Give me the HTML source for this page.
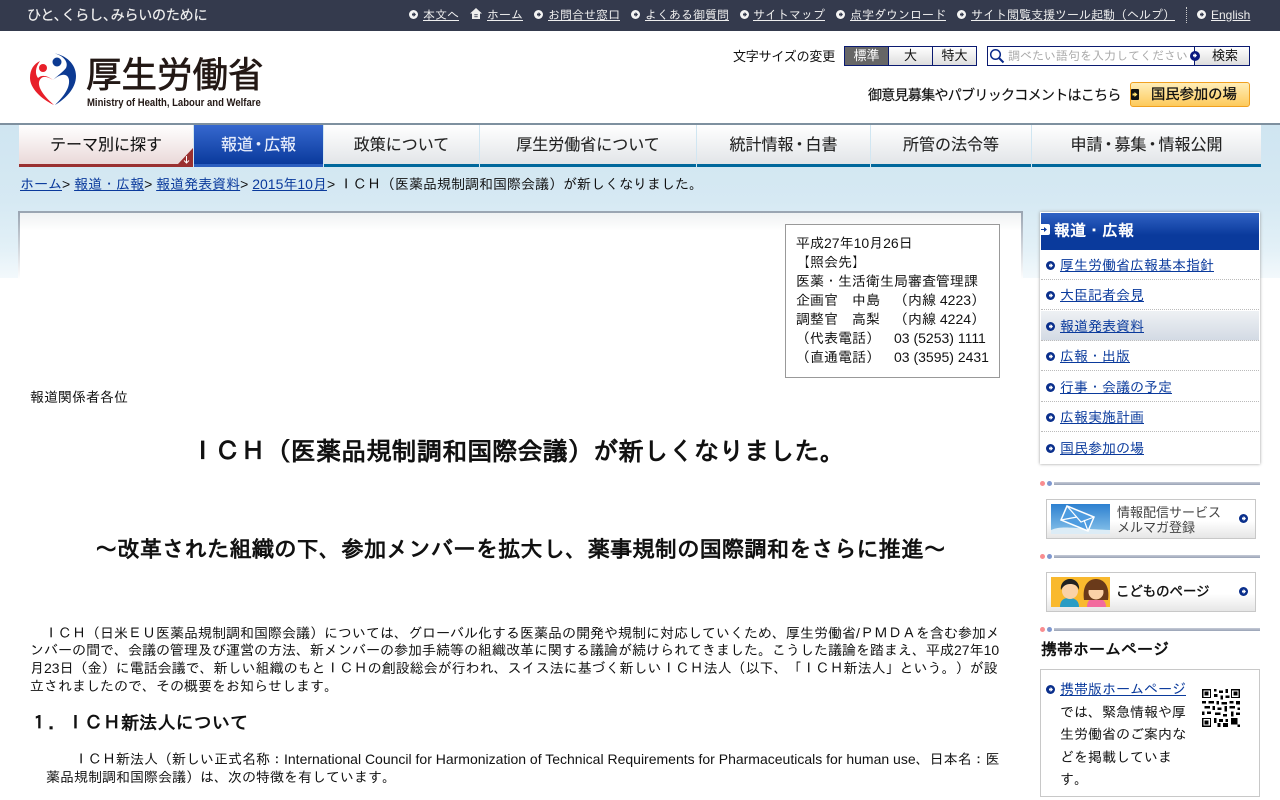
<!DOCTYPE html>
<html lang="ja"><head><meta charset="utf-8"><title>ＩＣＨ（医薬品規制調和国際会議）が新しくなりました。</title>
<style>
*{box-sizing:border-box}
html,body{margin:0;padding:0;width:1280px;height:800px;overflow:hidden;background:#fff}
body{position:relative;font-family:"Liberation Sans","IPAGothic",sans-serif;font-size:14px;color:#111}
.a{position:absolute;white-space:nowrap}
.n{font-family:"Liberation Sans","Noto Sans CJK JP",sans-serif}
a{color:#0a3a9c;text-decoration:underline}
#top{left:0;top:0;width:1280px;height:31px;background:#343a4d}
#top a{color:#eee;position:absolute;top:8px;font-size:12px;line-height:15px;white-space:nowrap}
.tb{position:absolute;top:10px;width:9px;height:9px;border-radius:50%;background:#f4f4f4}
.tb:after{content:"";position:absolute;left:3px;top:2px;width:4px;height:5px;background:#343a4d;clip-path:polygon(0 30%,40% 30%,40% 0,100% 50%,40% 100%,40% 70%,0 70%)}
#bg{left:0;top:125px;width:1280px;height:153px;background:linear-gradient(#cfe5f1 0,#d6e9f3 50%,#e2f0f7 80%,#f3f9fc 100%)}
.tab{position:absolute;top:125px;height:42px;background:linear-gradient(#fff,#e2e5e8);border-bottom:3px solid #00689c;text-align:center;font-size:16px;line-height:41px;color:#222;white-space:nowrap;font-family:"Liberation Sans","Noto Sans CJK JP",sans-serif;-webkit-text-stroke:.1px #222}
.tab b{font-weight:normal;margin:0 -2px}
.nav{position:absolute;left:1041px;width:218px;height:30px;border-bottom:1px dotted #bbb;font-size:14px;line-height:30px;padding-left:19px}
.dot{position:absolute;width:9px;height:9px;border-radius:50%;background:#0a2f8c}
.dot:after{content:"";position:absolute;left:3px;top:2px;width:4px;height:5px;background:#fff;clip-path:polygon(0 30%,40% 30%,40% 0,100% 50%,40% 100%,40% 70%,0 70%)}
.sep{position:absolute;left:1054px;width:206px;height:3px;background:linear-gradient(#c5cbd6,#98a2b5)}
.s1,.s2{position:absolute;width:5px;height:5px;border-radius:50%}
.s1{left:1040px;background:#f98d90}.s2{left:1047px;background:#7e97cf}
.ban{position:absolute;left:1046px;width:210px;height:40px;border:1px solid #c8c8c8;background:linear-gradient(#fff 55%,#e6e6e6)}
.t{position:absolute;left:30px;white-space:nowrap;font-size:14px;line-height:18px;color:#111}
.btn{position:absolute;top:46px;height:20px;border:1px solid #0a1a70;background:linear-gradient(#fff,#ddd);text-align:center;font-size:13px;line-height:18px;color:#111;font-family:"Liberation Sans","Noto Sans CJK JP",sans-serif}
</style></head><body>
<div class="a" id="bg"></div>

<div class="a" id="top">
<div class="a n" style="left:27px;top:5px;font-size:14px;line-height:20px;color:#f0f0f0;-webkit-text-stroke:.2px #f0f0f0;letter-spacing:-.2px">ひと<span style="margin-right:-6px">、</span>くらし<span style="margin-right:-6px">、</span>みらいのために</div>
<i class="tb" style="left:409px"></i><a style="left:423px">本文へ</a>
<svg class="a" style="left:470px;top:8px" width="12" height="11" viewBox="0 0 12 11"><path d="M6 0 0 5.500h2V11h8V5.500h2z" fill="#eee"/><path d="M4.500 6h1.200v1.300H4.500zM6.300 6h1.200v1.300H6.300zM4.500 8h1.200v1.300H4.500zM6.300 8h1.200v1.300H6.300z" fill="#343a4d"/></svg><a style="left:487px">ホーム</a>
<i class="tb" style="left:534px"></i><a style="left:548px">お問合せ窓口</a>
<i class="tb" style="left:631px"></i><a style="left:645px">よくある御質問</a>
<i class="tb" style="left:740px"></i><a style="left:753px">サイトマップ</a>
<i class="tb" style="left:836px"></i><a style="left:850px">点字ダウンロード</a>
<i class="tb" style="left:957px"></i><a style="left:971px">サイト閲覧支援ツール起動（ヘルプ）</a>
<div class="a" style="left:1186px;top:7px;height:16px;border-left:1px dotted #ccc"></div>
<i class="tb" style="left:1197px"></i><a style="left:1211px">English</a>
</div>

<svg class="a" style="left:29px;top:52px" width="48" height="54" viewBox="0 0 48 54">
<path d="M25 53C12 47 1 36 1 26 1 17 5 12 11 9 6 16 6 22 9 26 13 22 19 24 24 28 18 24 12 23 10 30 9 37 17 46 25 53z" fill="#e8202a"/>
<circle cx="14" cy="16" r="4" fill="#e8202a"/>
<path d="M24 1C37 3 47 12 47 24 47 37 36 47 26 53 33 46 41 37 40 28 39 21 32 21 24 28 28 24 34 20 37 16 40 10 34 3 24 1z" fill="#0c3a92"/>
<circle cx="28" cy="10" r="4.500" fill="#0c3a92"/>
</svg>
<div class="a n" style="left:86px;top:51px;font-size:35.500px;line-height:48px;color:#231815;-webkit-text-stroke:.7px #231815">厚生労働省</div>
<div class="a" style="left:87px;top:97px;font-size:11px;line-height:13px;color:#231815;font-weight:bold;transform:scaleX(.865);transform-origin:left">Ministry of Health, Labour and Welfare</div>

<div class="a n" style="left:733px;top:48px;font-size:13px;line-height:18px;color:#111;letter-spacing:-.2px">文字サイズの変更</div>
<div class="btn" style="left:844px;width:45px;background:#666;color:#fff">標準</div>
<div class="btn" style="left:888px;width:45px">大</div>
<div class="btn" style="left:932px;width:45px">特大</div>
<div class="a" style="left:987px;top:46px;width:263px;height:20px;border:1px solid #0a1a70;background:#fff"></div>
<svg class="a" style="left:989px;top:48px" width="16" height="16" viewBox="0 0 16 16"><circle cx="6.500" cy="6.500" r="4.800" fill="none" stroke="#0a2a8a" stroke-width="1.500"/><path d="m10 10 4.500 4.500" stroke="#0a2a8a" stroke-width="2"/></svg>
<div class="a" style="left:1008px;top:49px;font-size:12px;line-height:15px;color:#aaa">調べたい語句を入力してください</div>
<div class="btn" style="left:1194px;width:56px;padding-left:6px">検索</div>
<i class="dot" style="left:1190px;top:51px;width:10px;height:10px;background:#0a1a80"></i>
<div class="a n" style="left:868px;top:85px;font-size:14px;line-height:20px;color:#111;letter-spacing:-.7px;-webkit-text-stroke:.15px #111">御意見募集やパブリックコメントはこちら</div>
<div class="a n" style="left:1130px;top:82px;width:120px;height:25px;border:1px solid #f0a020;border-radius:3px;background:linear-gradient(#ffeeb8,#fdca5c);font-size:14.300px;line-height:25px;color:#111;padding-left:20px;-webkit-text-stroke:.3px #111">国民参加の場</div>
<svg class="a" style="left:1131px;top:89px" width="8" height="11" viewBox="0 0 8 11"><rect width="8" height="11" rx="1" fill="#111"/><path d="M1.500 4.500h2V3l3 2.500-3 2.500V6.500h-2z" fill="#ffe070"/></svg>

<div class="a" style="left:0;top:123px;width:1280px;height:2px;background:#7e909f"></div>
<div class="tab" style="left:19px;width:174px;background:linear-gradient(#fff,#ead9d9);border-color:#9a3030;color:#111">テーマ別に探す</div>
<div class="a" style="left:178px;top:148px;width:15px;height:16px;background:#9a3030;clip-path:polygon(100% 0,100% 100%,0 100%)"></div>
<svg class="a" style="left:182px;top:155px" width="9" height="9" viewBox="0 0 9 9"><path d="M4.500 1v7M2 5.500 4.500 8 7 5.500" fill="none" stroke="#fff"/></svg>
<div class="tab" style="left:194px;width:129px;background:linear-gradient(#3668cf,#0a3a9c);border-color:#2b5ebf;color:#e8eefc;-webkit-text-stroke:.2px #e8eefc">報道<b style="margin:0 -2.500px">・</b>広報</div>
<div class="tab" style="left:324px;width:155px">政策について</div>
<div class="tab" style="left:480px;width:216px">厚生労働省について</div>
<div class="tab" style="left:697px;width:173px">統計情報<b>・</b>白書</div>
<div class="tab" style="left:871px;width:160px">所管の法令等</div>
<div class="tab" style="left:1032px;width:229px">申請<b>・</b>募集<b>・</b>情報公開</div>

<div class="a" style="left:20px;top:175px;line-height:18px"><a>ホーム</a>&gt; <a>報道・広報</a>&gt; <a>報道発表資料</a>&gt; <a>2015年10月</a>&gt; ＩＣＨ（医薬品規制調和国際会議）が新しくなりました。</div>

<div class="a" style="left:18px;top:211px;width:1005px;height:589px;background:linear-gradient(#eff1f2,#fff 18px);border-top:2px solid #9aa5b2"></div>
<div class="a" style="left:18px;top:211px;width:2px;height:68px;background:linear-gradient(#9aa5b2,rgba(170,180,192,0))"></div>
<div class="a" style="left:1021px;top:211px;width:2px;height:68px;background:linear-gradient(#9aa5b2,rgba(170,180,192,0))"></div>

<div class="a" style="left:785px;top:224px;width:215px;height:154px;border:1px solid #999;padding:9px 0 0 10px;line-height:19px;background:#fff">平成27年10月26日<br>【照会先】<br>医薬・生活衛生局審査管理課<br>企画官　中島　（内線 4223）<br>調整官　高梨　（内線 4224）<br>（代表電話）　03 (5253) 1111<br>（直通電話）　03 (3595) 2431</div>

<div class="t" style="top:388px">報道関係者各位</div>
<div class="a" style="left:190px;top:436.500px;font-size:25.200px;line-height:30px;font-weight:bold;color:#111">ＩＣＨ（医薬品規制調和国際会議）が新しくなりました。</div>
<div class="a" style="left:95px;top:535px;font-size:22.400px;line-height:30px;font-weight:bold;color:#111">～改革された組織の下、参加メンバーを拡大し、薬事規制の国際調和をさらに推進～</div>
<div class="t" style="top:624px">　ＩＣＨ（日米ＥＵ医薬品規制調和国際会議）については、グローバル化する医薬品の開発や規制に対応していくため、厚生労働省/ＰＭＤＡを含む参加メ</div>
<div class="t" style="top:641px">ンバーの間で、会議の管理及び運営の方法、新メンバーの参加手続等の組織改革に関する議論が続けられてきました。こうした議論を踏まえ、平成27年10</div>
<div class="t" style="top:659px">月23日（金）に電話会議で、新しい組織のもとＩＣＨの創設総会が行われ、スイス法に基づく新しいＩＣＨ法人（以下、「ＩＣＨ新法人」という。）が設</div>
<div class="t" style="top:677px">立されましたので、その概要をお知らせします。</div>
<div class="t" style="top:711px;font-size:18.200px;line-height:24px;font-weight:bold;color:#111">１．ＩＣＨ新法人について</div>
<div class="t" style="top:750px;left:46px">　　ＩＣＨ新法人（新しい正式名称：International Council for Harmonization of Technical Requirements for Pharmaceuticals for human use、日本名：医</div>
<div class="t" style="top:768px;left:46px">薬品規制調和国際会議）は、次の特徴を有しています。</div>

<div class="a" style="left:1040px;top:212px;width:220px;height:252px;background:#fff;box-shadow:0 0 3px #999"></div>
<div class="a" style="left:1041px;top:213px;width:218px;height:37px;background:linear-gradient(#3062c4,#0a3a9c 60%);color:#fff;font-size:16px;font-weight:bold;line-height:37px;padding-left:13px">報道・広報</div>
<svg class="a" style="left:1041px;top:224px" width="9" height="11" viewBox="0 0 9 11"><path d="M0 0h7q2 0 2 2v7q0 2-2 2H0z" fill="#fff"/><path d="M0 5h3V3l3 2.500L3 8V6H0z" fill="#0a3a9c"/></svg>
<div class="nav" style="top:250px"><i class="dot" style="left:5px;top:11px"></i><a>厚生労働省広報基本指針</a></div>
<div class="nav" style="top:280px"><i class="dot" style="left:5px;top:11px"></i><a>大臣記者会見</a></div>
<div class="nav" style="top:311px;background:linear-gradient(#eef1f4,#d3dae4)"><i class="dot" style="left:5px;top:11px"></i><a>報道発表資料</a></div>
<div class="nav" style="top:341px"><i class="dot" style="left:5px;top:11px"></i><a>広報・出版</a></div>
<div class="nav" style="top:372px"><i class="dot" style="left:5px;top:11px"></i><a>行事・会議の予定</a></div>
<div class="nav" style="top:402px"><i class="dot" style="left:5px;top:11px"></i><a>広報実施計画</a></div>
<div class="nav" style="top:433px;border:0"><i class="dot" style="left:5px;top:11px"></i><a>国民参加の場</a></div>

<i class="s1" style="top:481px"></i><i class="s2" style="top:481px"></i><div class="sep" style="top:482px"></div>
<div class="ban" style="top:499px"></div>
<svg class="a" style="left:1051px;top:504px" width="59" height="30" viewBox="0 0 59 30"><defs><linearGradient id="sk" x1="0" y1="0" x2="0" y2="1"><stop offset="0" stop-color="#2d80d0"/><stop offset="1" stop-color="#8ac4ea"/></linearGradient></defs><rect width="59" height="30" fill="url(#sk)"/><path d="M0 26c12-5 25-1 59 0v4H0z" fill="#dcecf6"/><path d="M16 2 43 13 37 27 10 16z" fill="#4e9ce0" stroke="#fff" stroke-width="1.500"/><path d="M16 2 30 18 43 13M10 16 26 13M37 27 33 16" fill="none" stroke="#fff" stroke-width="1.200"/></svg>
<div class="a n" style="left:1117px;top:505px;font-size:13px;line-height:15px;color:#444">情報配信サービス<br>メルマガ登録</div>
<i class="dot" style="left:1239px;top:514px"></i>
<i class="s1" style="top:554px"></i><i class="s2" style="top:554px"></i><div class="sep" style="top:555px"></div>
<div class="ban" style="top:572px"></div>
<svg class="a" style="left:1051px;top:577px" width="59" height="30" viewBox="0 0 59 30"><rect width="59" height="30" fill="#f9b92e"/><path d="M9 30c0-7 4-9 9-9s10 2 10 9z" fill="#2a9cc4"/><circle cx="19" cy="14" r="8" fill="#fbd2a8"/><path d="M10 13c-1-7 4-11 9-11s10 4 9 11c-2-5-5-6-9-6s-7 2-9 6z" fill="#222"/><path d="M36 30c0-7 4-9 9-9s10 2 10 9z" fill="#f36b9e"/><path d="M33 23c-2-14 4-21 12-21s14 7 12 21z" fill="#6a3a1a"/><circle cx="45" cy="15" r="7.500" fill="#fbd2a8"/><path d="M37 13c1-5 4-7 8-7s7 2 8 7z" fill="#6a3a1a"/></svg>
<div class="a n" style="left:1116px;top:582px;font-size:13.400px;line-height:19px;color:#111;-webkit-text-stroke:.4px #111">こどものページ</div>
<i class="dot" style="left:1239px;top:587px"></i>
<i class="s1" style="top:627px"></i><i class="s2" style="top:627px"></i><div class="sep" style="top:628px"></div>
<div class="a" style="left:1041px;top:641px;font-size:16px;line-height:20px;font-weight:bold;color:#111">携帯ホームページ</div>
<div class="a" style="left:1040px;top:669px;width:220px;height:128px;border:1px solid #c8c8c8"></div>
<i class="dot" style="left:1046px;top:685px"></i>
<div class="a" style="left:1060px;top:678px;font-size:14px;line-height:22.500px;color:#111"><a>携帯版ホームページ</a><br>では、緊急情報や厚<br>生労働省のご案内な<br>どを掲載していま<br>す。</div>
<svg class="a" style="left:1202px;top:689px" width="38" height="38" viewBox="0 0 29 29" shape-rendering="crispEdges"><path fill="#000" d="M0 0h7v7H0zM22 0h7v7h-7zM0 22h7v7H0z"/><path fill="#fff" d="M1 1h5v5H1zM23 1h5v5h-5zM1 23h5v5H1z"/><path fill="#000" d="M2 2h3v3H2zM24 2h3v3h-3zM2 24h3v3H2zM9 0h2v2H9zM13 1h3v2h-3zM18 0h2v3h-2zM9 4h3v2H9zM14 5h2v3h-2zM18 5h3v2h-3zM0 9h3v2H0zM5 9h4v2H5zM11 9h2v3h-2zM15 10h4v2h-4zM21 9h3v2h-3zM26 9h3v3h-3zM2 13h4v2H2zM8 13h2v3H8zM12 14h3v2h-3zM17 13h2v4h-2zM21 13h4v2h-4zM27 14h2v2h-2zM0 17h2v3H0zM4 17h3v2H4zM10 18h4v2h-4zM16 19h3v2h-3zM22 17h2v4h-2zM26 18h3v2h-3zM9 22h2v4H9zM13 23h3v2h-3zM18 23h2v2h-2zM22 22h5v5h-5zM12 26h2v3h-2zM16 26h4v3h-4zM24 24h1v1h-1zM27 27h2v2h-2z"/></svg>
</body></html>
